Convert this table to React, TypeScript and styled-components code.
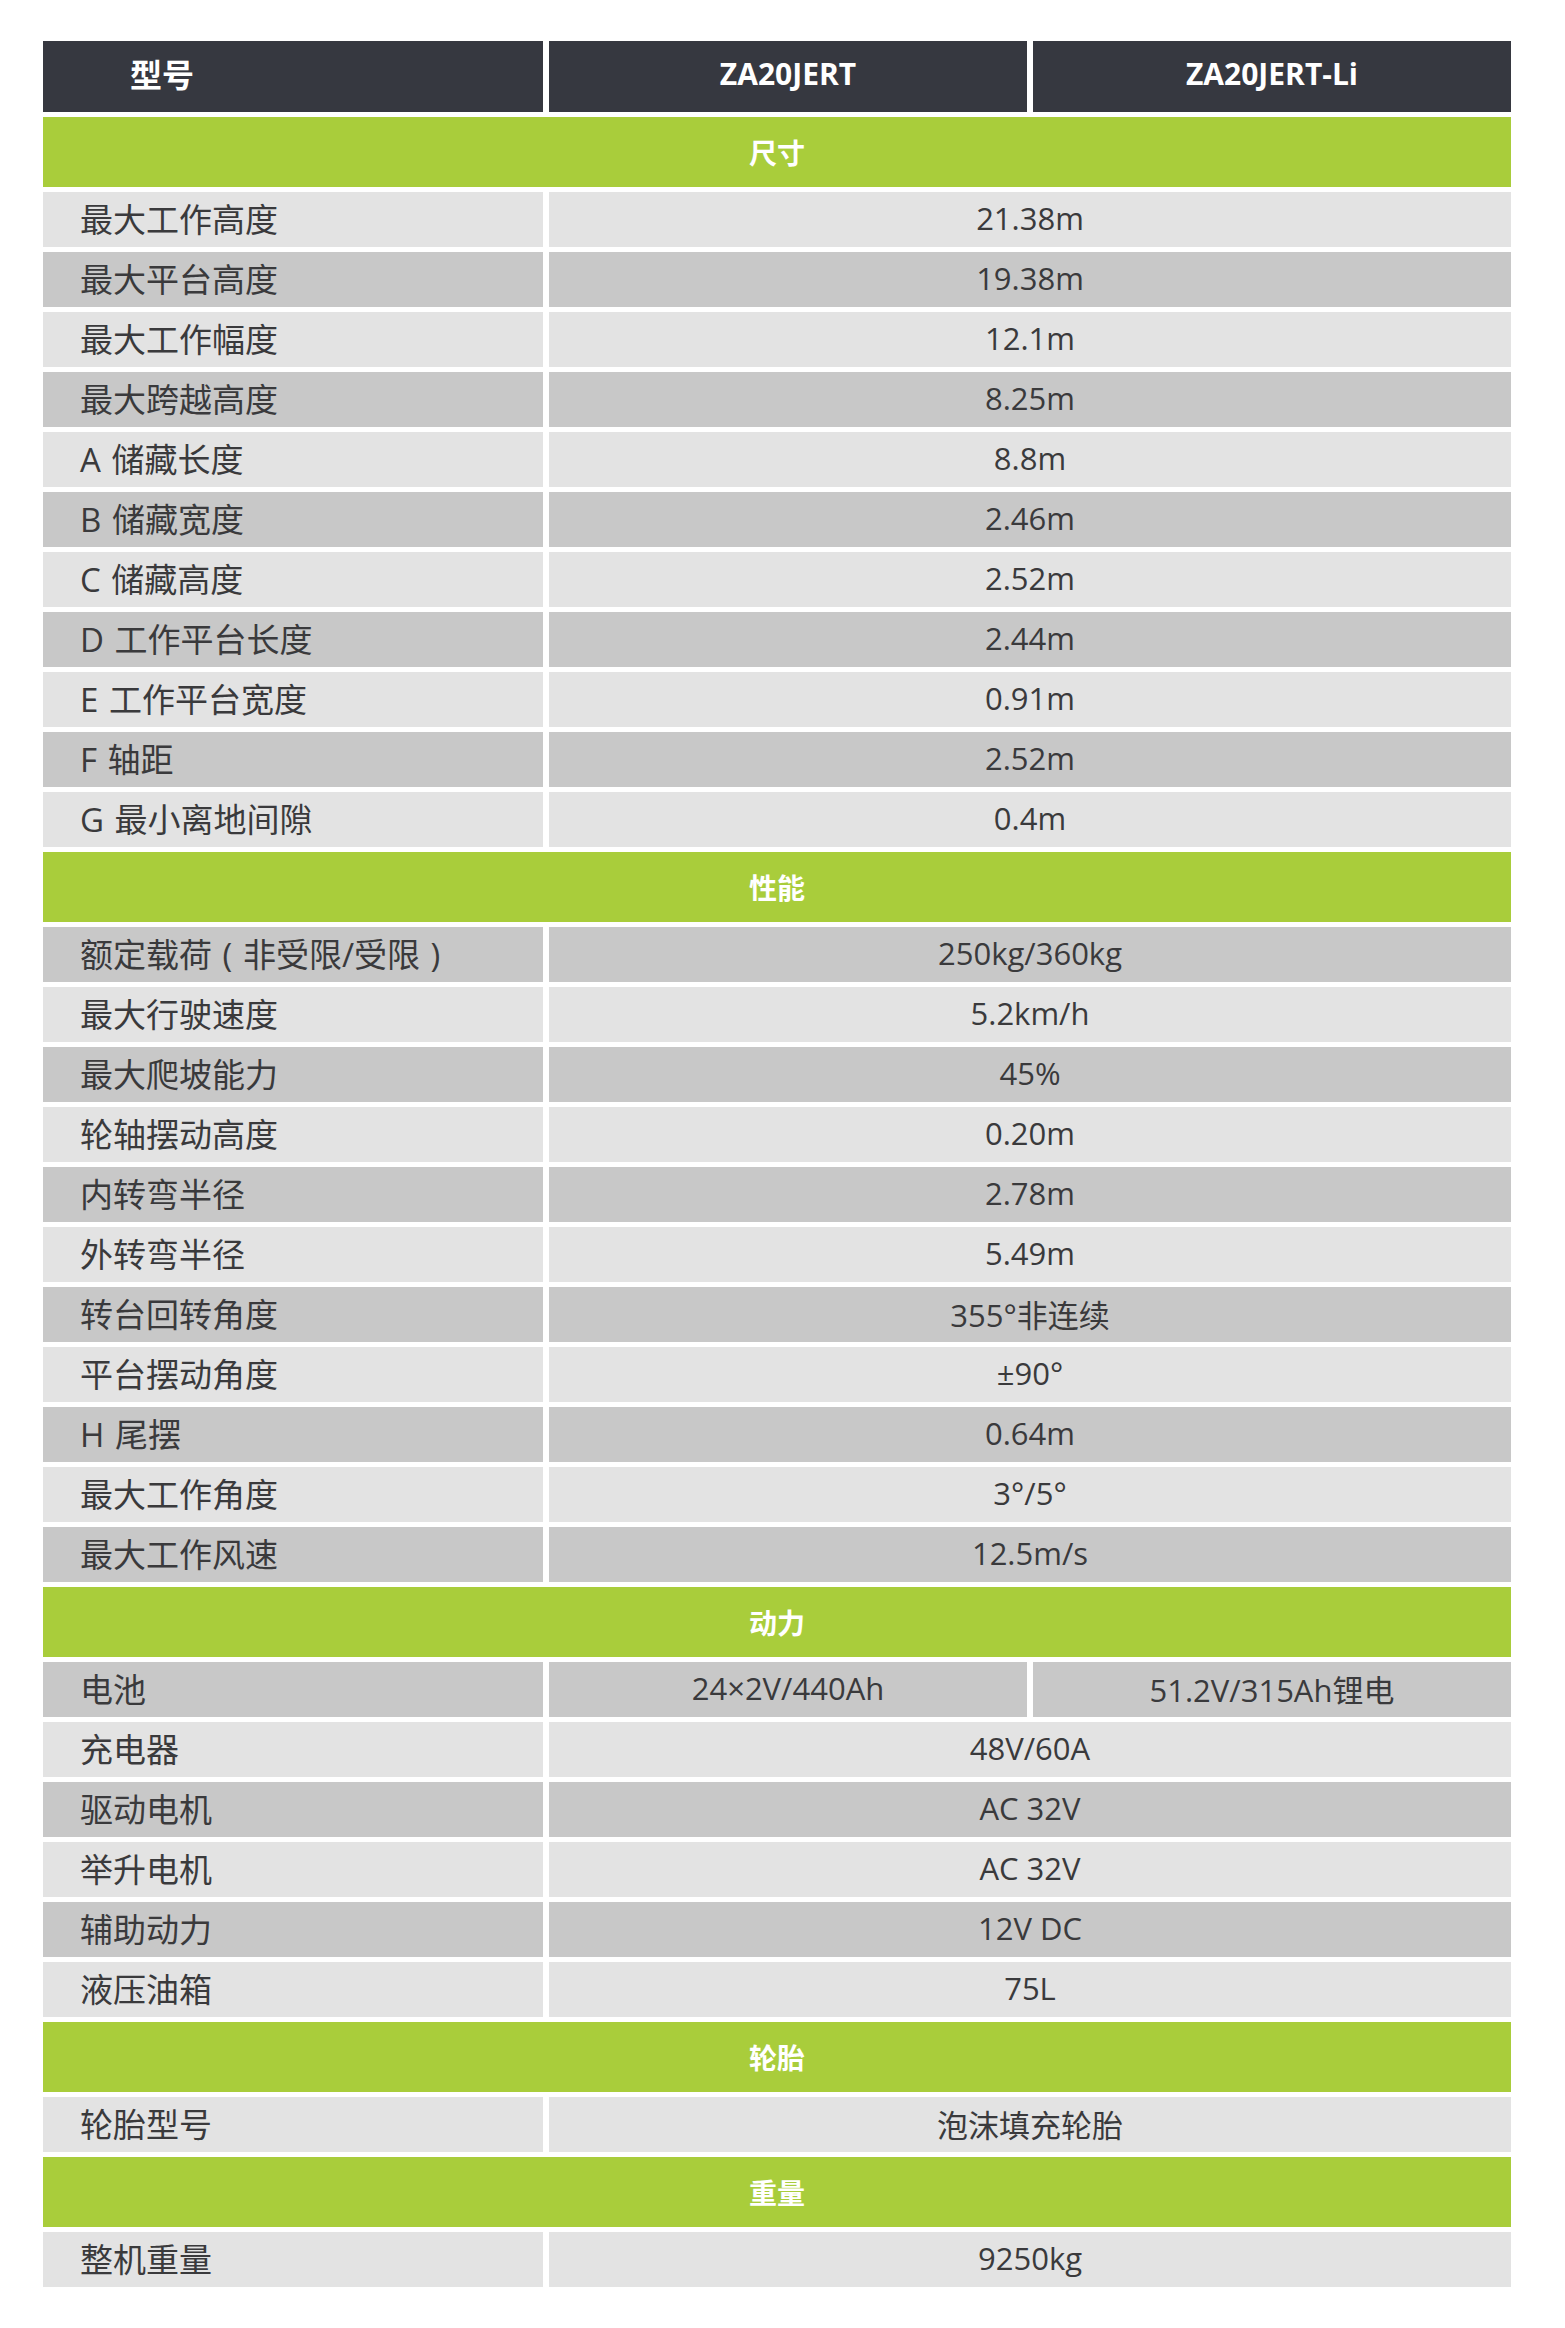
import * as React from 'react';
import styled, { createGlobalStyle } from 'styled-components';

/*************************************************************************/

const GlobalStyle = createGlobalStyle`
  html, body {
    margin: 0;
    padding: 0;
    background: #fff;
  }
  body {
    font-family: "Open Sans", "Noto Sans CJK SC", sans-serif;
  }
`;

const Page = styled.div`
  min-height: 2328px;
  padding: 41px 0 0 43px;
  box-sizing: border-box;
`;

const Table = styled.div`
  display: grid;
  grid-template-columns: 500px 478px 478px;
  column-gap: 6px;
  row-gap: 5px;
  width: 1468px;
`;

const HeadCell = styled.div<{ $left?: boolean }>`
  height: 71px;
  box-sizing: border-box;
  padding-bottom: 7px;
  background: #363840;
  color: #fff;
  font-weight: 700;
  font-size: ${(p) => (p.$left ? '32px' : '30px')};
  display: flex;
  align-items: center;
  justify-content: ${(p) => (p.$left ? 'flex-start' : 'center')};
  padding-left: ${(p) => (p.$left ? '87px' : '0')};
`;

const SectionTitle = styled.div`
  grid-column: 1 / 4;
  height: 70px;
  background: #a9cd3b;
  color: #fff;
  font-weight: 700;
  font-size: 28px;
  display: flex;
  align-items: center;
  justify-content: center;
`;

const Cell = styled.div<{ $dark: boolean; $span?: number }>`
  grid-column: span ${(p) => p.$span || 1};
  height: 55px;
  box-sizing: border-box;
  padding-bottom: 3px;
  background: ${(p) => (p.$dark ? '#c8c8c8' : '#e3e3e3')};
  color: #3a3a3c;
  font-size: 31px;
  display: flex;
  align-items: center;
  white-space: nowrap;
`;

const LabelCell = styled(Cell)`
  padding-left: 37px;
  font-size: 33px;
  word-spacing: 2px;
`;

const ValueCell = styled(Cell)`
  justify-content: center;
`;

/*************************************************************************/

type Row = { label: string; values: string[] };
type Section = { title: string; startDark: boolean; rows: Row[] };

const sections: Section[] = [
  {
    title: '尺寸',
    startDark: false,
    rows: [
      { label: '最大工作高度', values: ['21.38m'] },
      { label: '最大平台高度', values: ['19.38m'] },
      { label: '最大工作幅度', values: ['12.1m'] },
      { label: '最大跨越高度', values: ['8.25m'] },
      { label: 'A 储藏长度', values: ['8.8m'] },
      { label: 'B 储藏宽度', values: ['2.46m'] },
      { label: 'C 储藏高度', values: ['2.52m'] },
      { label: 'D 工作平台长度', values: ['2.44m'] },
      { label: 'E 工作平台宽度', values: ['0.91m'] },
      { label: 'F 轴距', values: ['2.52m'] },
      { label: 'G 最小离地间隙', values: ['0.4m'] }
    ]
  },
  {
    title: '性能',
    startDark: true,
    rows: [
      { label: '额定载荷 ( 非受限/受限 )', values: ['250kg/360kg'] },
      { label: '最大行驶速度', values: ['5.2km/h'] },
      { label: '最大爬坡能力', values: ['45%'] },
      { label: '轮轴摆动高度', values: ['0.20m'] },
      { label: '内转弯半径', values: ['2.78m'] },
      { label: '外转弯半径', values: ['5.49m'] },
      { label: '转台回转角度', values: ['355°非连续'] },
      { label: '平台摆动角度', values: ['±90°'] },
      { label: 'H 尾摆', values: ['0.64m'] },
      { label: '最大工作角度', values: ['3°/5°'] },
      { label: '最大工作风速', values: ['12.5m/s'] }
    ]
  },
  {
    title: '动力',
    startDark: true,
    rows: [
      { label: '电池', values: ['24×2V/440Ah', '51.2V/315Ah锂电'] },
      { label: '充电器', values: ['48V/60A'] },
      { label: '驱动电机', values: ['AC 32V'] },
      { label: '举升电机', values: ['AC 32V'] },
      { label: '辅助动力', values: ['12V DC'] },
      { label: '液压油箱', values: ['75L'] }
    ]
  },
  {
    title: '轮胎',
    startDark: false,
    rows: [{ label: '轮胎型号', values: ['泡沫填充轮胎'] }]
  },
  {
    title: '重量',
    startDark: false,
    rows: [{ label: '整机重量', values: ['9250kg'] }]
  }
];

/*************************************************************************/

const App = () => {
  return (
    <Page>
      <GlobalStyle />
      <Table>
        <HeadCell $left>型号</HeadCell>
        <HeadCell>ZA20JERT</HeadCell>
        <HeadCell>ZA20JERT-Li</HeadCell>
        {sections.map((s) => (
          <React.Fragment key={s.title}>
            <SectionTitle>{s.title}</SectionTitle>
            {s.rows.map((r, i) => {
              const dark = i % 2 === 0 ? s.startDark : !s.startDark;
              return (
                <React.Fragment key={r.label}>
                  <LabelCell $dark={dark}>{r.label}</LabelCell>
                  {r.values.map((v) => (
                    <ValueCell key={v} $dark={dark} $span={r.values.length === 1 ? 2 : 1}>
                      {v}
                    </ValueCell>
                  ))}
                </React.Fragment>
              );
            })}
          </React.Fragment>
        ))}
      </Table>
    </Page>
  );
};

export default App;
